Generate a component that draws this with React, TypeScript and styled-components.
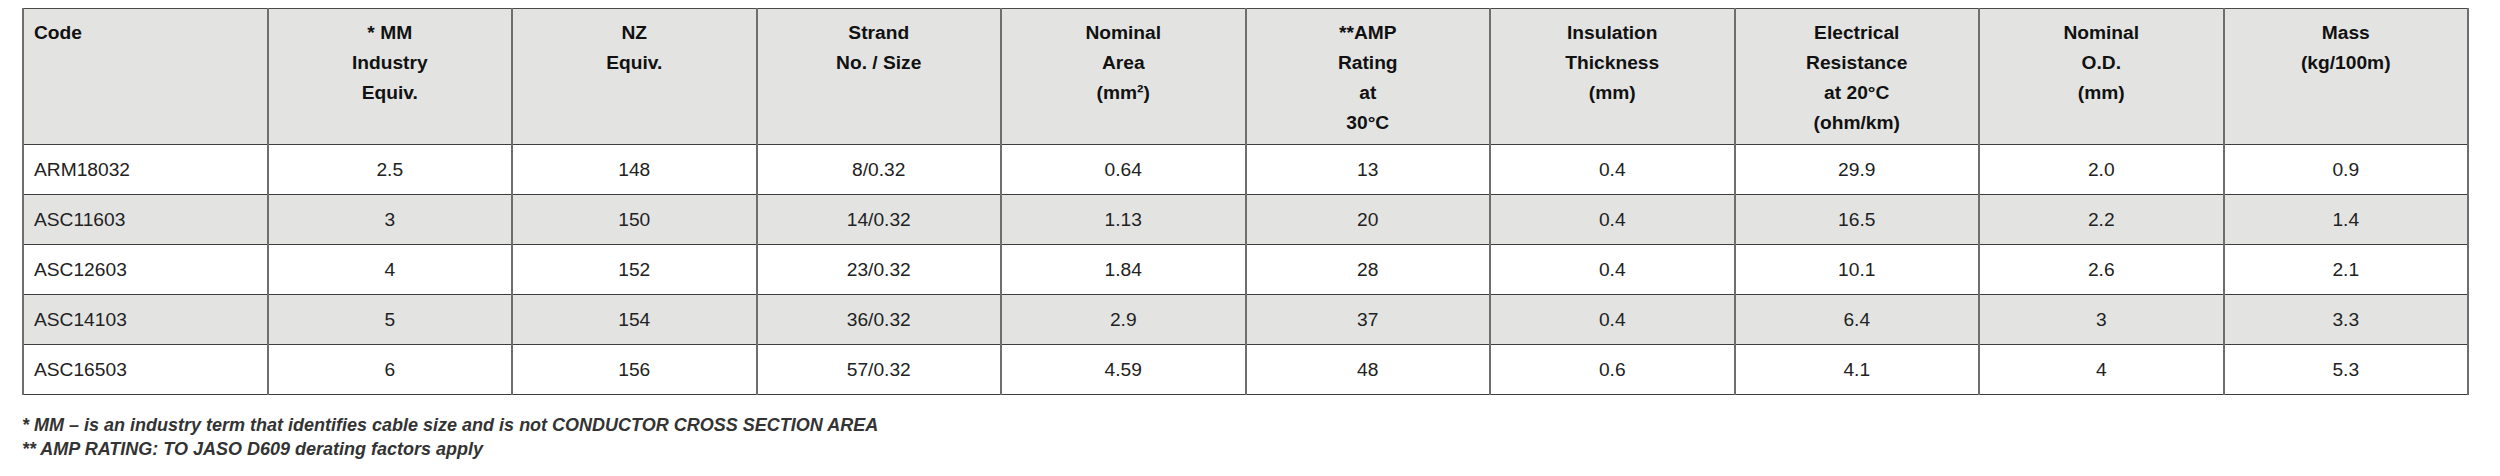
import styled, { createGlobalStyle } from 'styled-components';

const GlobalStyle = createGlobalStyle`
  html, body {
    margin: 0;
    padding: 0;
    background: #ffffff;
  }
  body {
    font-family: "Liberation Sans", Arial, sans-serif;
  }
`;

interface CableRow {
  code: string;
  mm: string;
  nz: string;
  strand: string;
  area: string;
  amp: string;
  insulation: string;
  resistance: string;
  od: string;
  mass: string;
}

const headings: string[][] = [
  ['Code'],
  ['* MM', 'Industry', 'Equiv.'],
  ['NZ', 'Equiv.'],
  ['Strand', 'No. / Size'],
  ['Nominal', 'Area', '(mm²)'],
  ['**AMP', 'Rating', 'at', '30°C'],
  ['Insulation', 'Thickness', '(mm)'],
  ['Electrical', 'Resistance', 'at 20°C', '(ohm/km)'],
  ['Nominal', 'O.D.', '(mm)'],
  ['Mass', '(kg/100m)'],
];

const rows: CableRow[] = [
  { code: 'ARM18032', mm: '2.5', nz: '148', strand: '8/0.32', area: '0.64', amp: '13', insulation: '0.4', resistance: '29.9', od: '2.0', mass: '0.9' },
  { code: 'ASC11603', mm: '3', nz: '150', strand: '14/0.32', area: '1.13', amp: '20', insulation: '0.4', resistance: '16.5', od: '2.2', mass: '1.4' },
  { code: 'ASC12603', mm: '4', nz: '152', strand: '23/0.32', area: '1.84', amp: '28', insulation: '0.4', resistance: '10.1', od: '2.6', mass: '2.1' },
  { code: 'ASC14103', mm: '5', nz: '154', strand: '36/0.32', area: '2.9', amp: '37', insulation: '0.4', resistance: '6.4', od: '3', mass: '3.3' },
  { code: 'ASC16503', mm: '6', nz: '156', strand: '57/0.32', area: '4.59', amp: '48', insulation: '0.6', resistance: '4.1', od: '4', mass: '5.3' },
];

const Page = styled.div`
  padding: 8px 31px 0 22px;
`;

const Table = styled.table`
  width: 2447px;
  table-layout: fixed;
  border-collapse: collapse;
  font-size: 19.2px;
  border: 1px solid #4a4a4a;
`;

const HeadCell = styled.th<{ $first: boolean }>`
  height: 126px;
  padding: 9px 10px 0;
  vertical-align: top;
  text-align: ${p => (p.$first ? 'left' : 'center')};
  font-weight: bold;
  line-height: 30px;
  color: #111111;
  background: #e3e4e2;
  border-top: 1px solid #4a4a4a;
  border-bottom: 1px solid #3e3e3e;
  border-left: 2px solid #6e6e6e;
  border-right: 2px solid #6e6e6e;
`;

const HeadLine = styled.div`
  white-space: nowrap;
`;

const BodyRow = styled.tr<{ $shaded: boolean }>`
  background: ${p => (p.$shaded ? '#e3e4e2' : '#ffffff')};
`;

const Cell = styled.td<{ $first: boolean }>`
  height: 49px;
  padding: 0 10px;
  text-align: ${p => (p.$first ? 'left' : 'center')};
  vertical-align: middle;
  color: #222222;
  line-height: 30px;
  border-top: 1px solid #3e3e3e;
  border-bottom: 1px solid #3e3e3e;
  border-left: 2px solid #6e6e6e;
  border-right: 2px solid #6e6e6e;
`;

const Notes = styled.div`
  margin-top: 18px;
  font-size: 18px;
  line-height: 24px;
  font-weight: bold;
  font-style: italic;
  color: #333333;
`;

export default function App() {
  return (
    <Page>
      <GlobalStyle />
      <Table>
        <thead>
          <tr>
            {headings.map((lines, i) => (
              <HeadCell key={i} $first={i === 0}>
                {lines.map(line => (
                  <HeadLine key={line}>{line}</HeadLine>
                ))}
              </HeadCell>
            ))}
          </tr>
        </thead>
        <tbody>
          {rows.map((r, i) => {
            const values = [r.code, r.mm, r.nz, r.strand, r.area, r.amp, r.insulation, r.resistance, r.od, r.mass];
            return (
              <BodyRow key={r.code} $shaded={i % 2 === 1}>
                {values.map((v, j) => (
                  <Cell key={j} $first={j === 0}>{v}</Cell>
                ))}
              </BodyRow>
            );
          })}
        </tbody>
      </Table>
      <Notes>
        <div>* MM – is an industry term that identifies cable size and is not CONDUCTOR CROSS SECTION AREA</div>
        <div>** AMP RATING: TO JASO D609 derating factors apply</div>
      </Notes>
    </Page>
  );
}
